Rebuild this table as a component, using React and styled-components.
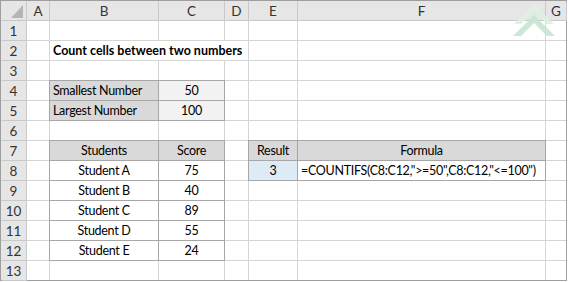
import React from "react";
import styled, { createGlobalStyle, css } from "styled-components";

const GlobalStyle = createGlobalStyle`
  html, body { margin: 0; padding: 0; background: #ffffff; }
  body { font-family: Lato, "Open Sans", sans-serif; }
`;

const COLUMNS = ["A", "B", "C", "D", "E", "F", "G"];
const WIDTHS = [25, 22, 108, 65, 23, 48, 247, 20];

const Wrap = styled.div`
  position: relative;
  width: fit-content;
`;

const Sheet = styled.div`
  display: grid;
  grid-template-columns: ${WIDTHS.map((w) => `${w}px`).join(" ")};
  grid-auto-rows: 19px;
  gap: 1px;
  background: #d4d4d4;
  border: 1px solid #9e9e9e;
  font-family: Lato, "Open Sans", sans-serif;
  font-size: 12.5px;
  color: #000;
`;

const Header = styled.div`
  background: #e6e6e6;
  color: #333;
  display: flex;
  align-items: center;
  justify-content: center;
  font-size: 13.5px;
  box-shadow: 1px 1px 0 #c8c8c8;
`;

const Corner = styled(Header)`
  justify-content: flex-end;
  align-items: flex-end;
  padding: 0 3px 2px 0;
`;

const CornerMark = styled.span`
  width: 0;
  height: 0;
  border-left: 12px solid transparent;
  border-bottom: 13px solid #b5b5b5;
`;

const Cell = styled.div`
  background: ${(p) => p.$fill || "#ffffff"};
  display: flex;
  align-items: center;
  justify-content: ${(p) =>
    p.$align === "left" ? "flex-start" : p.$align === "right" ? "flex-end" : "center"};
  padding: 0 3px;
  white-space: nowrap;
  overflow: visible;
  font-weight: ${(p) => (p.$bold ? 700 : 400)};
  letter-spacing: ${(p) => (p.$bold ? "0" : "-0.3px")};
  grid-column: ${(p) => (p.$span ? `span ${p.$span}` : "auto")};
  ${(p) =>
    p.$boxed &&
    css`
      box-shadow: 0 0 0 1px #a6a6a6;
    `}
`;

const Watermark = styled.svg`
  position: absolute;
  left: 508px;
  top: 1px;
  pointer-events: none;
`;

const GRAY = "#d9d9d9";
const LIGHT = "#f2f2f2";
const BLUE = "#ddebf7";

// Sheet contents keyed by row, each cell lists its column letter
const rows = {
  2: [{ col: "B", text: "Count cells between two numbers", bold: true, align: "left", span: 3 }],
  4: [
    { col: "B", text: "Smallest Number", align: "left", fill: GRAY, boxed: true },
    { col: "C", text: "50", fill: LIGHT, boxed: true },
  ],
  5: [
    { col: "B", text: "Largest Number", align: "left", fill: GRAY, boxed: true },
    { col: "C", text: "100", fill: LIGHT, boxed: true },
  ],
  7: [
    { col: "B", text: "Students", fill: GRAY, boxed: true },
    { col: "C", text: "Score", fill: GRAY, boxed: true },
    { col: "E", text: "Result", fill: GRAY, boxed: true },
    { col: "F", text: "Formula", fill: GRAY, boxed: true },
  ],
  8: [
    { col: "B", text: "Student A", boxed: true },
    { col: "C", text: "75", boxed: true },
    { col: "E", text: "3", fill: BLUE, boxed: true },
    { col: "F", text: '=COUNTIFS(C8:C12,">=50",C8:C12,"<=100")', align: "left", boxed: true },
  ],
  9: [
    { col: "B", text: "Student B", boxed: true },
    { col: "C", text: "40", boxed: true },
  ],
  10: [
    { col: "B", text: "Student C", boxed: true },
    { col: "C", text: "89", boxed: true },
  ],
  11: [
    { col: "B", text: "Student D", boxed: true },
    { col: "C", text: "55", boxed: true },
  ],
  12: [
    { col: "B", text: "Student E", boxed: true },
    { col: "C", text: "24", boxed: true },
  ],
};

function Row({ n }) {
  const defs = rows[n] || [];
  const out = [<Header key="h">{n}</Header>];
  let skip = 0;
  COLUMNS.forEach((c) => {
    if (skip > 0) {
      skip -= 1;
      return;
    }
    const d = defs.find((x) => x.col === c);
    if (d) {
      if (d.span) skip = d.span - 1;
      out.push(
        <Cell
          key={c}
          $fill={d.fill}
          $align={d.align}
          $bold={d.bold}
          $span={d.span}
          $boxed={d.boxed}
        >
          {d.text}
        </Cell>
      );
    } else {
      out.push(<Cell key={c} />);
    }
  });
  return out;
}

export default function App() {
  return (
    <>
      <GlobalStyle />
      <Wrap>
        <Sheet>
          <Corner>
            <CornerMark />
          </Corner>
          {COLUMNS.map((c) => (
            <Header key={c}>{c}</Header>
          ))}
          {Array.from({ length: 13 }, (_, i) => (
            <Row key={i + 1} n={i + 1} />
          ))}
        </Sheet>
        <Watermark width="52" height="40" viewBox="0 0 52 40">
          <polygon points="26,3 46,23 39,23 26,10 13,23 6,23" fill="#ddefe3" opacity="0.9" />
          <polygon points="26,14 47,35 39,35 26,22 13,35 5,35" fill="#c8e4d1" opacity="0.9" />
        </Watermark>
      </Wrap>
    </>
  );
}
